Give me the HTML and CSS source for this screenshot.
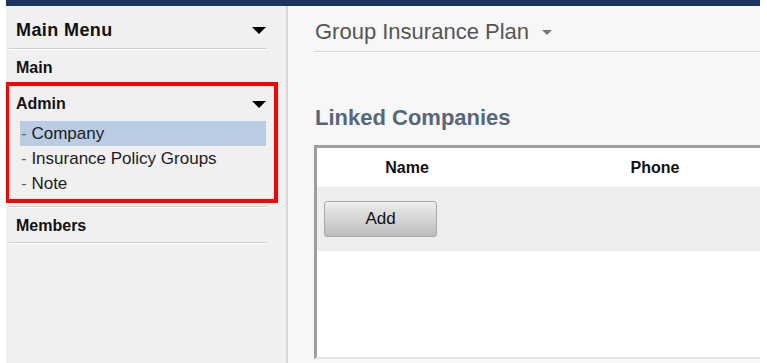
FILE: index.html
```html
<!DOCTYPE html>
<html lang="en">
<head>
  <meta charset="UTF-8" />
  <meta name="viewport" content="width=device-width, initial-scale=1.0"/>
  <title>Group Insurance Plan - Linked Companies</title>
  <link rel="stylesheet" href="styles.css">
</head>
<body>

  <div class="frame">
    <div class="topbar"></div>

    <div class="layout">
      <aside class="sidebar">
        <div class="menu-head">
          <span>Main Menu</span>
          <span class="caret"></span>
        </div>

        <div class="menu-section">Main</div>

        <div class="menu-group marked">
          <div class="menu-section no-line">
            <span>Admin</span>
            <span class="caret"></span>
          </div>
          <ul class="submenu">
            <li class="active"><span class="dash">-</span> Company</li>
            <li><span class="dash">-</span> Insurance Policy Groups</li>
            <li><span class="dash">-</span> Note</li>
          </ul>
        </div>

        <div class="menu-section">Members</div>
      </aside>

      <main class="content">
        <div class="page-title">
          Group Insurance Plan <span class="caret-small"></span>
        </div>

        <h2>Linked Companies</h2>

        <div class="grid-box">
          <div class="grid-head">
            <div class="col-name">Name</div>
            <div class="col-phone">Phone</div>
          </div>
          <div class="grid-toolbar">
            <button class="btn">Add</button>
          </div>
          <div class="grid-body"></div>
        </div>
      </main>
    </div>
  </div>

</body>
</html>
```

FILE: styles.css
```css
body {
  margin: 0;
  background: #fff;
  font-family: "Liberation Sans", Arial, sans-serif;
  color: #111;
}

.frame {
  margin: 0 7px 0 6px;
  height: 363px;
  display: flex;
  flex-direction: column;
  overflow: hidden;
}

.topbar {
  height: 6px;
  background-color: #1b3560;
}

.layout {
  flex: 1;
  display: flex;
}

/* left menu */

.sidebar {
  width: 282px;
  box-sizing: border-box;
  padding: 0 20px 0 3px;
  background-color: #f0f0f0;
  border-right: 2px solid #d6d6d6;
}

.menu-head,
.menu-section {
  display: flex;
  justify-content: space-between;
  align-items: center;
  padding-left: 7px;
  border-bottom: 1px solid #cdcdcd;
  box-shadow: 0 1px 0 #fff;
  font-weight: bold;
  line-height: 20px;
}

.menu-head {
  font-size: 18px;
  letter-spacing: 0.4px;
  padding-top: 14px;
  padding-bottom: 8px;
}

.menu-section {
  font-size: 16px;
  padding-top: 9px;
  padding-bottom: 6px;
}

.menu-section.no-line {
  border-bottom: none;
  box-shadow: none;
  padding-top: 9px;
  padding-bottom: 7px;
}

.caret {
  width: 0;
  height: 0;
  border-left: 7px solid transparent;
  border-right: 7px solid transparent;
  border-top: 7px solid #000;
}

.menu-group {
  position: relative;
  padding-bottom: 10px;
  border-bottom: 1px solid #cdcdcd;
  box-shadow: 0 1px 0 #fff;
}

/* red annotation frame */
.menu-group.marked::after {
  content: "";
  position: absolute;
  top: -3px;
  left: -4px;
  right: -12px;
  bottom: 3px;
  border: 4px solid #f00;
}

.submenu {
  list-style: none;
  margin: 0 0 0 11px;
  padding: 0;
}

.submenu li {
  height: 25px;
  line-height: 25px;
  padding-left: 1px;
  font-size: 17px;
  color: #1c1c1c;
}

.submenu li.active {
  background-color: #b9cce4;
}

.dash {
  color: #666;
}

/* main area */

.content {
  flex: 1;
  background-color: #f7f7f7;
  padding-left: 26px;
  min-width: 0;
}

.page-title {
  display: flex;
  align-items: center;
  gap: 13px;
  font-size: 22px;
  line-height: 24px;
  color: #555;
  padding: 14px 0 7px 1px;
  border-bottom: 1px solid #d9d9d9;
  box-shadow: 0 1px 0 #fff;
}

.caret-small {
  width: 0;
  height: 0;
  border-left: 5px solid transparent;
  border-right: 5px solid transparent;
  border-top: 5px solid #777;
}

.content h2 {
  margin: 54px 0 15px 1px;
  font-size: 22px;
  line-height: 24px;
  color: #56677a;
}

.grid-box {
  border-top: 3px solid #9e9e9e;
  border-left: 3px solid #9e9e9e;
  border-bottom: 2px solid #e4e4e4;
  background-color: #fff;
}

.grid-head {
  display: flex;
  height: 39px;
  align-items: center;
  border-bottom: 1px solid #e8e8e8;
  font-size: 16px;
  font-weight: bold;
}

.col-name {
  flex: 0 0 180px;
  text-align: center;
}

.col-phone {
  flex: 0 0 316px;
  text-align: center;
}

.grid-toolbar {
  height: 63px;
  box-sizing: border-box;
  padding: 13px 7px;
  background-color: #eeeeee;
}

.btn {
  width: 113px;
  height: 36px;
  border: 1px solid #a8a8a8;
  border-radius: 3px;
  background: linear-gradient(to bottom, #ededed, #bcbcbc);
  font-family: "Liberation Sans", Arial, sans-serif;
  font-size: 17px;
  color: #111;
}

.grid-body {
  height: 106px;
}
```
